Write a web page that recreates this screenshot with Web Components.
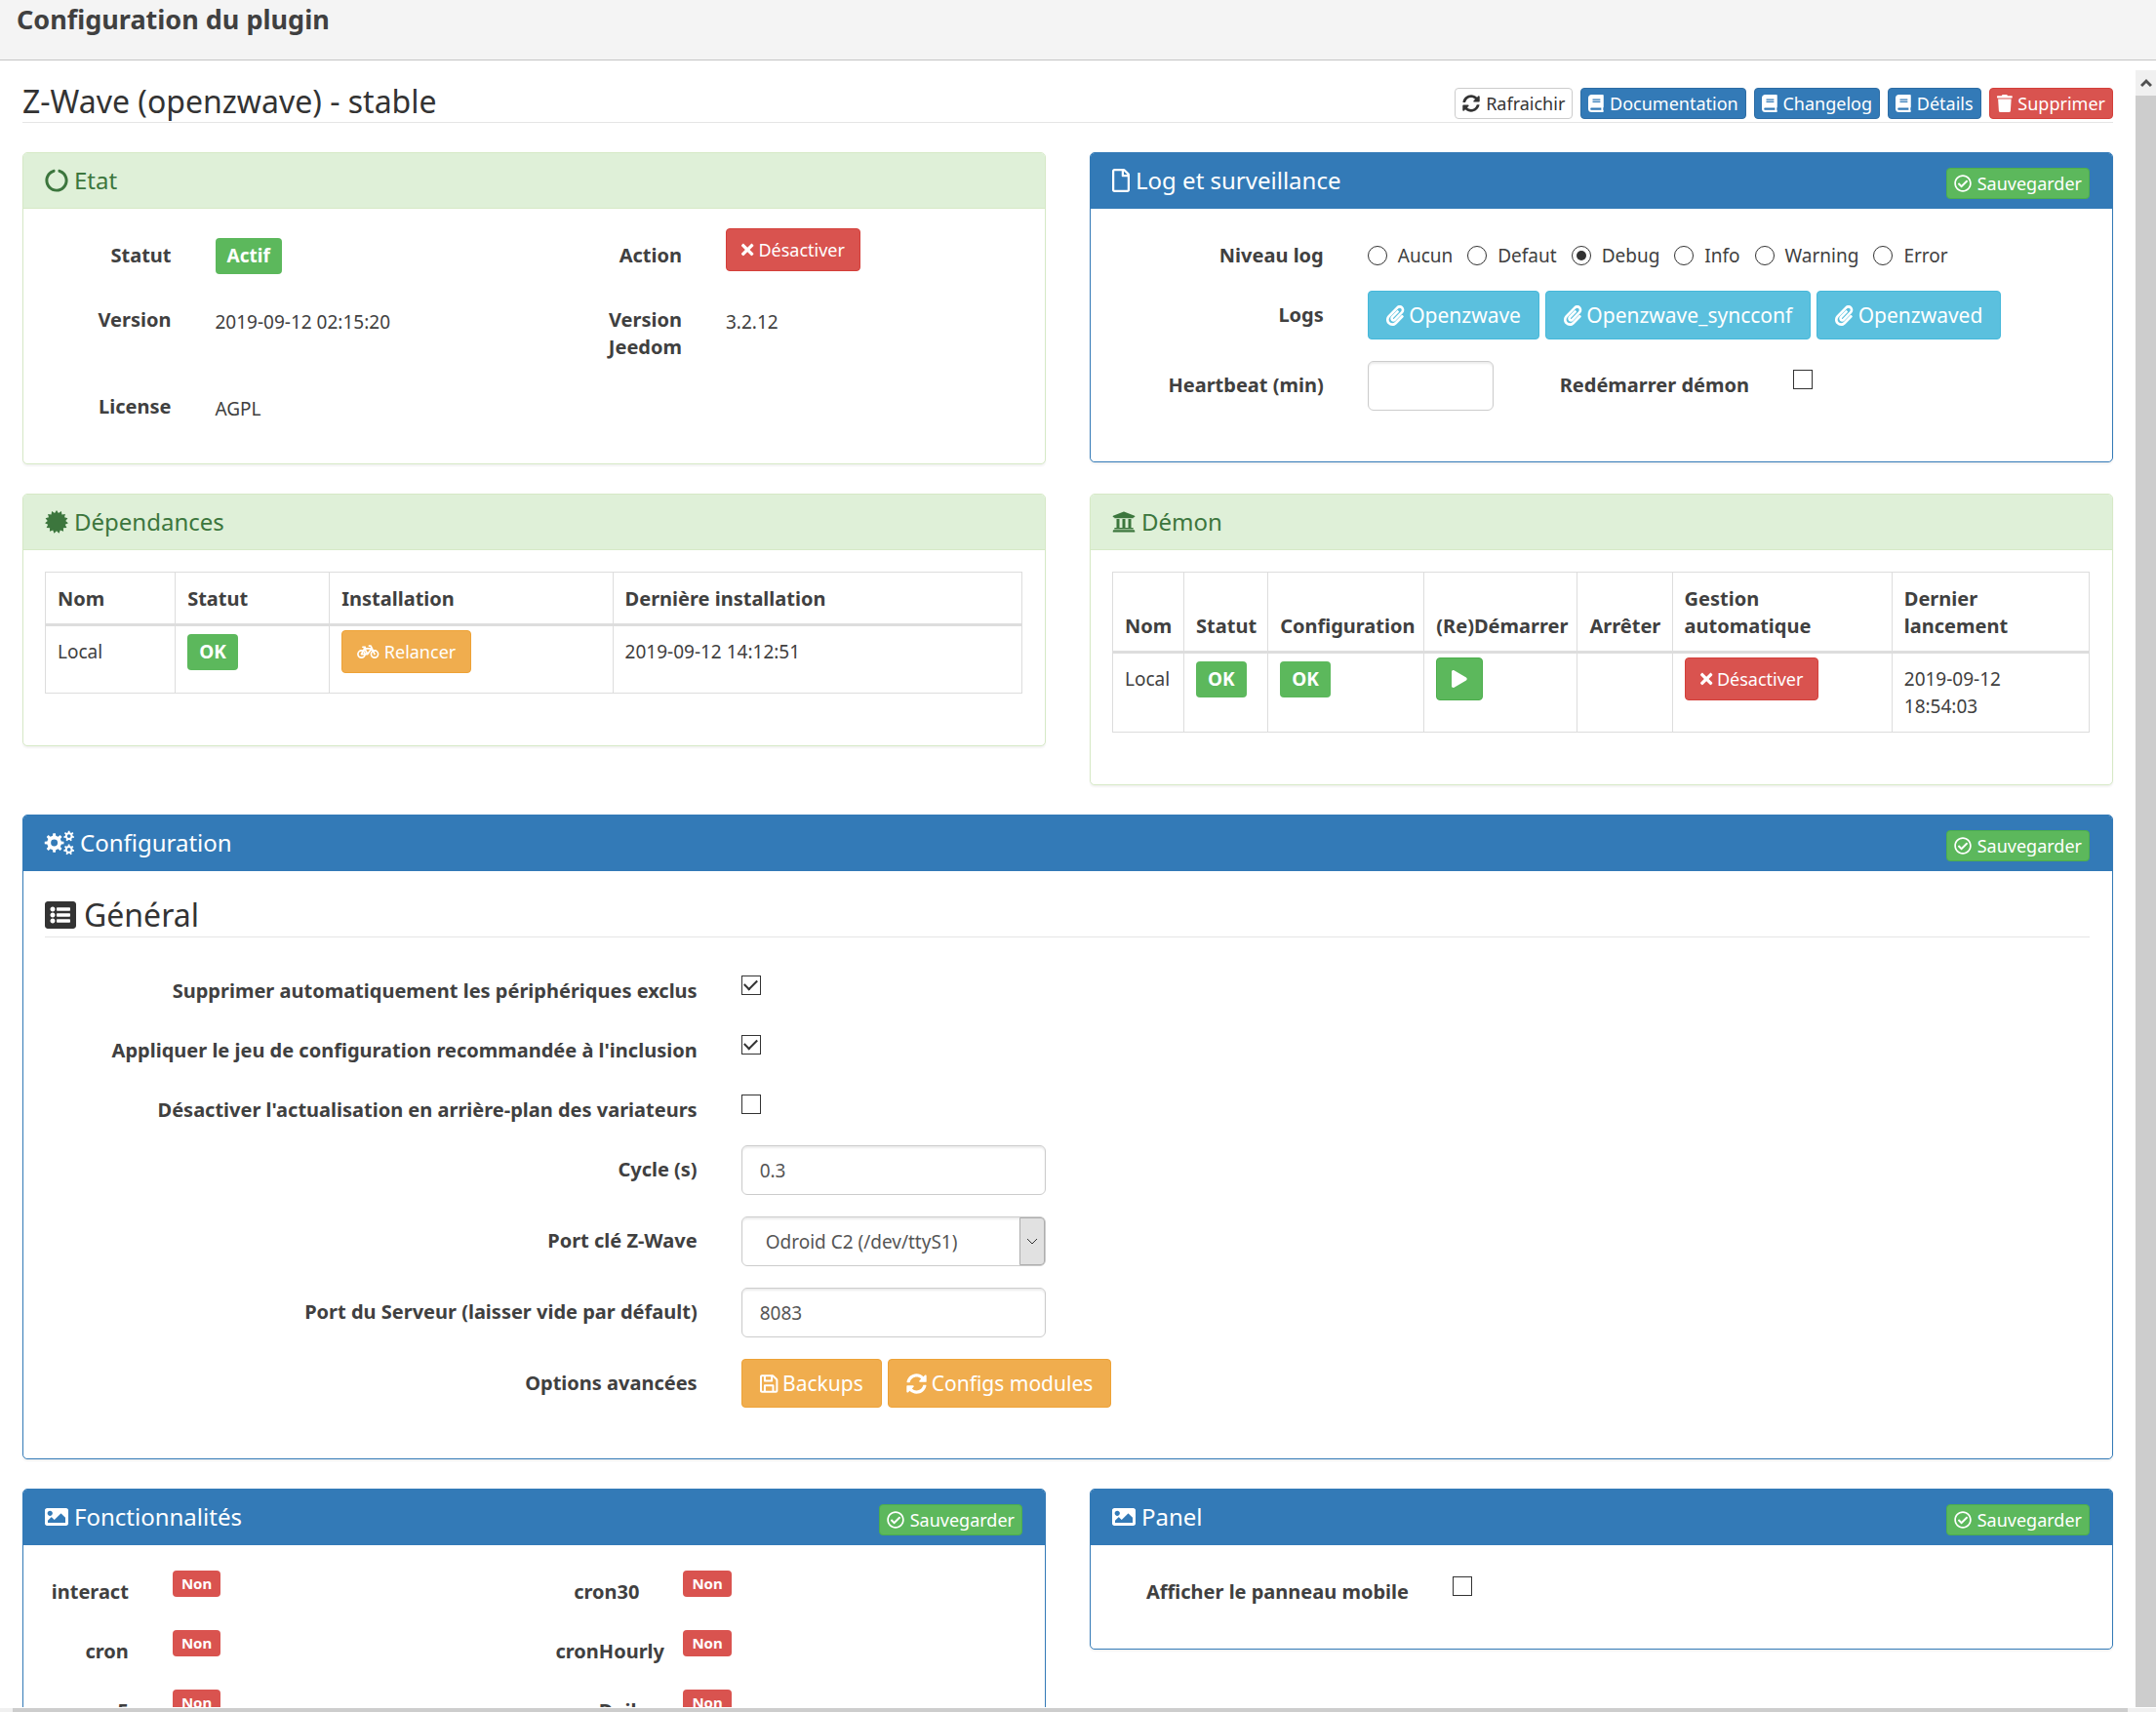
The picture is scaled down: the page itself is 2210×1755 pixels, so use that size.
<!DOCTYPE html>
<html lang="fr">
<head>
<meta charset="utf-8">
<title>Configuration du plugin</title>
<style>
html,body{margin:0;height:100%}
body{font-family:"Noto Sans",sans-serif;font-size:19px;line-height:28px;color:#404040;background:#fff;overflow:hidden}
</style>
</head>
<body>
<plugin-dialog></plugin-dialog>
<script>
/* Outline with n pointed teeth, for the certificate seal */
const seal=(cx,cy,n,R,r)=>'M'+Array.from({length:2*n},(_,i)=>{const a=Math.PI*i/n,q=i%2?r:R;return (cx+q*Math.sin(a)).toFixed(1)+' '+(cy-q*Math.cos(a)).toFixed(1)}).join('L')+'Z';
/* Gear with n square teeth and a round hole */
const gear=(cx,cy,n,R,r,h)=>{
  const pts=[];
  for(let i=0;i<n;i++)for(const [o,q] of [[-.28,r],[-.17,R],[.17,R],[.28,r]]){
    const a=2*Math.PI*(i+o)/n;pts.push((cx+q*Math.sin(a)).toFixed(1)+' '+(cy-q*Math.cos(a)).toFixed(1));
  }
  return `M${pts.join('L')}ZM${cx-h} ${cy}a${h} ${h} 0 1 0 ${2*h} 0a${h} ${h} 0 1 0 ${-2*h} 0Z`;
};
const ICONS={
sync:[512,512,'<path d="M370.72 133.28C339.458 104.008 298.888 87.962 255.848 88c-77.458.068-144.328 53.178-162.791 126.85-1.344 5.363-6.122 9.15-11.651 9.15H24.103c-7.498 0-13.194-6.807-11.807-14.176C33.933 94.924 134.813 8 256 8c66.448 0 126.791 26.136 171.315 68.685L463.03 40.97C478.149 25.851 504 36.559 504 57.941V192c0 13.255-10.745 24-24 24H345.941c-21.382 0-32.09-25.851-16.971-40.971l41.75-41.749zM32 296h134.059c21.382 0 32.09 25.851 16.971 40.971l-41.75 41.75c31.262 29.273 71.835 45.319 114.876 45.28 77.418-.07 144.315-53.144 162.787-126.849 1.344-5.363 6.122-9.15 11.651-9.15h57.304c7.498 0 13.194 6.807 11.807 14.176C478.067 417.076 377.187 504 256 504c-66.448 0-126.791-26.136-171.315-68.685L48.97 471.03C33.851 486.149 8 475.441 8 454.059V320c0-13.255 10.745-24 24-24z"/>'],
book:[448,512,'<path d="M448 360V24c0-13.3-10.7-24-24-24H96C43 0 0 43 0 96v320c0 53 43 96 96 96h328c13.3 0 24-10.7 24-24v-16c0-7.5-3.5-14.3-8.9-18.7-4.2-15.4-4.2-59.3 0-74.7 5.4-4.3 8.9-11.1 8.9-18.6zM128 134c0-3.3 2.7-6 6-6h212c3.3 0 6 2.7 6 6v20c0 3.3-2.7 6-6 6H134c-3.3 0-6-2.7-6-6v-20zm0 64c0-3.3 2.7-6 6-6h212c3.3 0 6 2.7 6 6v20c0 3.3-2.7 6-6 6H134c-3.3 0-6-2.7-6-6v-20zm253.4 250H96c-17.7 0-32-14.3-32-32 0-17.6 14.4-32 32-32h285.4c-1.9 17.1-1.9 46.9 0 64z"/>'],
trash:[448,512,'<path d="M432 32H312l-9.4-18.7A24 24 0 0 0 281.1 0H166.8a23.72 23.72 0 0 0-21.4 13.3L136 32H16A16 16 0 0 0 0 48v32a16 16 0 0 0 16 16h416a16 16 0 0 0 16-16V48a16 16 0 0 0-16-16zM53.2 467a48 48 0 0 0 47.9 45h245.8a48 48 0 0 0 47.9-45L416 128H32z"/>'],
check:[512,512,'<path d="M256 8C119.033 8 8 119.033 8 256s111.033 248 248 248 248-111.033 248-248S392.967 8 256 8zm0 48c110.532 0 200 89.451 200 200 0 110.532-89.451 200-200 200-110.532 0-200-89.451-200-200 0-110.532 89.451-200 200-200m140.204 130.267l-22.536-22.718c-4.667-4.705-12.265-4.736-16.97-.068L215.346 303.697l-59.792-60.277c-4.667-4.705-12.265-4.736-16.97-.069l-22.719 22.536c-4.705 4.667-4.736 12.265-.068 16.971l90.781 91.516c4.667 4.705 12.265 4.736 16.97.068l172.589-171.204c4.704-4.668 4.734-12.266.067-16.971z"/>'],
notch:[512,512,'<path d="M288 39.056v16.659c0 10.804 7.281 20.159 17.686 23.066C383.204 100.434 440 171.518 440 256c0 101.689-82.295 184-184 184-101.689 0-184-82.295-184-184 0-84.47 56.786-155.564 134.312-177.219C216.719 75.874 224 66.517 224 55.712V39.064c0-15.709-14.834-27.153-30.046-23.234C86.603 43.482 7.394 141.206 8.003 257.332c.72 137.052 111.477 246.956 248.531 246.667C393.255 503.711 504 392.788 504 256c0-115.633-79.14-212.779-186.211-240.236C302.678 11.889 288 23.456 288 39.056z"/>'],
file:[384,512,'<path d="M369.9 97.9L286 14C277 5 264.8-.1 252.1-.1H48C21.5 0 0 21.5 0 48v416c0 26.5 21.5 48 48 48h288c26.5 0 48-21.5 48-48V131.9c0-12.7-5.1-25-14.1-34zM332.1 128H256V51.9l76.1 76.1zM48 464V48h160v104c0 13.3 10.7 24 24 24h104v288H48z"/>'],
clip:[448,512,'<path d="M43.246 466.142c-58.43-60.289-57.341-157.511 1.386-217.581L254.392 34c44.316-45.332 116.351-45.336 160.671 0 43.89 44.894 43.943 117.329 0 162.276L232.214 383.128c-29.855 30.537-78.633 30.111-107.982-.998-28.275-29.97-27.368-77.473 1.452-106.953l143.743-146.835c6.182-6.314 16.312-6.422 22.626-.241l22.861 22.379c6.315 6.182 6.422 16.312.241 22.626L171.427 319.927c-4.932 5.045-5.236 13.428-.648 18.292 4.372 4.634 11.245 4.711 15.688.165l182.849-186.851c19.613-20.062 19.613-52.725-.011-72.798-19.189-19.627-49.957-19.637-69.154 0L90.39 293.295c-34.763 35.56-35.299 93.12-1.191 128.313 34.01 35.093 88.985 35.137 123.058.286l172.06-175.999c6.177-6.319 16.307-6.433 22.626-.256l22.877 22.364c6.319 6.177 6.434 16.307.256 22.626l-172.06 175.998c-59.576 60.938-155.943 60.216-214.77-.485z"/>'],
save:[448,512,'<path d="M433.941 129.941l-83.882-83.882A48 48 0 0 0 316.118 32H48C21.49 32 0 53.49 0 80v352c0 26.51 21.49 48 48 48h352c26.51 0 48-21.49 48-48V163.882a48 48 0 0 0-14.059-33.941zM272 80v80H144V80h128zm122 352H352V296a24 24 0 0 0-24-24H120a24 24 0 0 0-24 24v136H54a6 6 0 0 1-6-6V86a6 6 0 0 1 6-6h42v104c0 13.255 10.745 24 24 24h176c13.255 0 24-10.745 24-24V83.882l78.243 78.243a6 6 0 0 1 1.757 4.243V426a6 6 0 0 1-6 6zM144 432v-112h160v112z"/>'],
cert:[512,512,`<path d="${seal(256,256,15,256,198)}"/>`],
univ:[512,512,'<path d="M496 128v16a8 8 0 0 1-8 8h-24v12c0 6.627-5.373 12-12 12H60c-6.627 0-12-5.373-12-12v-12H24a8 8 0 0 1-8-8v-16a8 8 0 0 1 4.941-7.392l232-88a7.996 7.996 0 0 1 6.118 0l232 88A8 8 0 0 1 496 128zm-24 304H40c-13.255 0-24 10.745-24 24v16a8 8 0 0 0 8 8h464a8 8 0 0 0 8-8v-16c0-13.255-10.745-24-24-24zM96 192v192H60c-6.627 0-12 5.373-12 12v20h416v-20c0-6.627-5.373-12-12-12h-36V192h-64v192h-64V192h-64v192h-64V192H96z"/>'],
listalt:[512,512,'<path d="M464 480H48c-26.51 0-48-21.49-48-48V80c0-26.51 21.49-48 48-48h416c26.51 0 48 21.49 48 48v352c0 26.51-21.49 48-48 48zM128 120c-22.091 0-40 17.909-40 40s17.909 40 40 40 40-17.909 40-40-17.909-40-40-40zm0 96c-22.091 0-40 17.909-40 40s17.909 40 40 40 40-17.909 40-40-17.909-40-40-40zm0 96c-22.091 0-40 17.909-40 40s17.909 40 40 40 40-17.909 40-40-17.909-40-40-40zm288-136v-32c0-6.627-5.373-12-12-12H204c-6.627 0-12 5.373-12 12v32c0 6.627 5.373 12 12 12h200c6.627 0 12-5.373 12-12zm0 96v-32c0-6.627-5.373-12-12-12H204c-6.627 0-12 5.373-12 12v32c0 6.627 5.373 12 12 12h200c6.627 0 12-5.373 12-12zm0 96v-32c0-6.627-5.373-12-12-12H204c-6.627 0-12 5.373-12 12v32c0 6.627 5.373 12 12 12h200c6.627 0 12-5.373 12-12z"/>'],
image:[512,512,'<path d="M464 448H48c-26.51 0-48-21.49-48-48V112c0-26.51 21.49-48 48-48h416c26.51 0 48 21.49 48 48v288c0 26.51-21.49 48-48 48zM112 120c-30.928 0-56 25.072-56 56s25.072 56 56 56 56-25.072 56-56-25.072-56-56-56zM64 384h384V272l-87.515-87.515c-4.686-4.686-12.284-4.686-16.971 0L208 320l-55.515-55.515c-4.686-4.686-12.284-4.686-16.971 0L64 336v48z"/>'],
times:[352,512,'<path d="M242.72 256l100.07-100.07c12.28-12.28 12.28-32.19 0-44.48l-22.24-22.24c-12.28-12.28-32.19-12.28-44.48 0L176 189.28 75.93 89.21c-12.28-12.28-32.19-12.28-44.48 0L9.21 111.45c-12.28 12.28-12.28 32.19 0 44.48L109.28 256 9.21 356.07c-12.28 12.28-12.28 32.19 0 44.48l22.24 22.24c12.28 12.28 32.2 12.28 44.48 0L176 322.72l100.07 100.07c12.28 12.28 32.2 12.28 44.48 0l22.24-22.24c12.28-12.28 12.28-32.19 0-44.48L242.72 256z"/>'],
play:[448,512,'<path d="M424.4 214.7L72.4 6.6C43.8-10.3 0 6.1 0 47.9V464c0 37.5 40.7 60.1 72.4 41.3l352-208c31.4-18.5 31.5-64.1 0-82.6z"/>'],
bike:[640,512,'<g fill="none" stroke="currentColor" stroke-width="48" stroke-linejoin="round" stroke-linecap="round"><circle cx="128" cy="328" r="102"/><circle cx="512" cy="328" r="102"/><path d="M128 328L216 168H420L308 328ZM308 328L200 128M168 120H236M352 88H400L512 328"/></g>'],
cogs:[640,512,`<path fill-rule="evenodd" d="${gear(205,256,8,212,158,74)}${gear(526,108,7,116,84,40)}${gear(526,404,7,116,84,40)}"/>`]
};
const define=(name,html)=>customElements.define(name,class extends HTMLElement{
  constructor(){
    super();
    const t=document.createElement('template');
    t.innerHTML=typeof html==='function'?html(this):html;
    this.attachShadow({mode:'open'}).append(t.content.cloneNode(true));
  }
});

define('fa-icon',el=>{
  const [w,h,body]=ICONS[el.getAttribute('name')];
  return `<style>:host{display:inline-block;line-height:0}svg{display:block;height:1em;fill:currentColor;overflow:visible}</style>
  <svg viewBox="0 0 ${w} ${h}" aria-hidden="true">${body}</svg>`;
});

define('ui-button',el=>`<style>
:host{display:inline-block;flex:none}
button{display:flex;align-items:center;justify-content:center;gap:5px;margin:0;box-sizing:border-box;width:100%;font:inherit;white-space:nowrap;cursor:pointer;
border:1px solid var(--bd);background:var(--bg);color:var(--fg,#fff);border-radius:4px}
.xs{font-size:18px;height:32px;padding:0 7px;gap:6px}
.sm{font-size:18px;height:44px;padding:0 15px}
.md{font-size:21px;height:50px;padding:0 18px}
.default{--bg:#fff;--bd:#ccc;--fg:#333}
.primary{--bg:#337ab7;--bd:#2e6da4}
.success{--bg:#5cb85c;--bd:#4cae4c}
.danger{--bg:#d9534f;--bd:#d43f3a}
.warning{--bg:#f0ad4e;--bd:#eea236}
.info{--bg:#5bc0de;--bd:#46b8da}
</style><button type="button" class="${el.getAttribute('size')||'sm'} ${el.getAttribute('kind')}" ${el.hasAttribute('title')?`aria-label="${el.title}"`:''}>${el.hasAttribute('icon')?`<fa-icon name="${el.getAttribute('icon')}"></fa-icon>`:''}<slot></slot></button>`);

define('ui-badge',`<style>
:host{display:inline-block;box-sizing:border-box;height:37px;padding:0 12px;border-radius:4px;background:#5cb85c;color:#fff;font-weight:700;line-height:36px;vertical-align:top}
:host([kind=no]){height:27px;padding:0 9px;background:#d9534f;font-size:15px;line-height:27px}
</style><slot></slot>`);

define('ui-panel',el=>`<style>
:host{display:block;box-sizing:border-box;border:1px solid #337ab7;border-radius:5px;background:#fff;box-shadow:0 2px 2px rgba(0,0,0,.05);--hb:#337ab7;--hc:#fff}
:host([kind=success]){border-color:#d6e9c6;--hb:#dff0d8;--hc:#3c763d}
header{display:flex;align-items:flex-start;justify-content:space-between;box-sizing:border-box;height:57px;padding:15px 23px 0 22px;background:var(--hb);color:var(--hc);border-bottom:1px solid #337ab7;border-radius:4px 4px 0 0}
:host([kind=success]) header{border-color:#d6e9c6}
h3{margin:0;font-size:24px;line-height:25px;font-weight:400;display:flex;align-items:center;gap:6px}
.body{padding:22px 0}
</style><header><h3><fa-icon name="${el.getAttribute('icon')}"></fa-icon>${el.getAttribute('heading')}</h3>${el.hasAttribute('save')?'<ui-button size="xs" kind="success" icon="check">Sauvegarder</ui-button>':''}</header><div class="body"><slot></slot></div>`);

const FIELD=`
*{box-sizing:border-box}
:host{display:block;padding-top:1px}
.row{display:grid;grid-template-columns:var(--cols);margin-bottom:22px}
.row>*{padding:0 23px 0 22px;min-width:0}
.row>.lab{font-size:20px;font-weight:700;text-align:right;padding-top:11px}
.lab.nw{white-space:nowrap}
.row>.txt{padding-top:13px}
.row>.chk{padding-top:9px;line-height:0}
.btns{display:flex;gap:6px;align-items:flex-start}
input[type=checkbox]{appearance:none;margin:0;width:20px;height:20px;border:1px solid #333;background:#fff;display:inline-grid;place-items:center}
input[type=checkbox]:checked::before{content:"";width:11px;height:6px;border:solid #333;border-width:0 0 2px 2px;transform:translateY(-2px) rotate(-45deg)}
input[type=radio]{appearance:none;margin:0;width:20px;height:20px;border:1px solid #333;border-radius:50%;background:#fff;display:inline-grid;place-items:center}
input[type=radio]:checked::before{content:"";width:10px;height:10px;border-radius:50%;background:#333}
.ctl{display:block;width:100%;height:51px;padding:0 18px;border:1px solid #ccc;border-radius:6px;background:#fff;box-shadow:inset 0 2px 2px rgba(0,0,0,.075);font:inherit;color:#555}
`;
const COLS=(...n)=>n.map(x=>`minmax(0,${x}fr)`).join(' ');

define('state-form',`<style>${FIELD}:host{--cols:${COLS(2,4,2,4)}}.row>.bd{padding-top:7px}.up{margin:-3px 0 3px}.row:last-child{margin-bottom:20px}</style>
<div class="row"><div class="lab">Statut</div><div class="bd"><ui-badge>Actif</ui-badge></div><div class="lab">Action</div><div class="up"><ui-button kind="danger" icon="times">Désactiver</ui-button></div></div>
<div class="row"><div class="lab">Version</div><div class="txt">2019-09-12 02:15:20</div><div class="lab">Version Jeedom</div><div class="txt">3.2.12</div></div>
<div class="row"><div class="lab">License</div><div class="txt">AGPL</div></div>`);

define('log-form',`<style>${FIELD}:host{padding-bottom:8px}
.a{--cols:${COLS(3,9)}}.b{--cols:${COLS(3,2,3,4)}}
.row>.radios{display:flex;gap:15px;padding-top:11px}
.radios label{display:flex;align-items:center;gap:11px}
</style>
<div class="row a" role="radiogroup" aria-labelledby="lvl"><div class="lab" id="lvl">Niveau log</div><div class="radios">
${['Aucun','Defaut','Debug','Info','Warning','Error'].map(n=>`<label><input type="radio" name="level" ${n==='Debug'?'checked':''}>${n}</label>`).join('')}</div></div>
<div class="row a"><div class="lab">Logs</div><div class="btns">${['Openzwave','Openzwave_syncconf','Openzwaved'].map(n=>`<ui-button size="md" kind="info" icon="clip">${n}</ui-button>`).join('')}</div></div>
<div class="row b"><label class="lab" for="hb">Heartbeat (min)</label><div><input class="ctl" id="hb" type="text"></div><label class="lab" for="rd">Redémarrer démon</label><div class="chk"><input type="checkbox" id="rd"></div></div>`);

const TABLE=`:host{display:block;padding:0 23px 31px 22px}
table{width:100%;border-collapse:collapse;table-layout:fixed;border:1px solid #ddd}
th,td{border:1px solid #ddd;padding:12px;text-align:left;vertical-align:top}
th{vertical-align:bottom;border-bottom:3px solid #ddd;font-size:20px;padding:13px 8px 11px 12px}
td.bad{padding:8px 12px 0}
td.act{padding:4px 12px 20px;line-height:0}
`;
define('deps-table',`<style>${TABLE}</style><table>
<colgroup><col style="width:13.3%"><col style="width:15.8%"><col style="width:29%"><col></colgroup>
<thead><tr><th>Nom</th><th>Statut</th><th>Installation</th><th>Dernière installation</th></tr></thead>
<tbody><tr><td>Local</td><td class="bad"><ui-badge>OK</ui-badge></td><td class="act"><ui-button kind="warning" icon="bike">Relancer</ui-button></td><td>2019-09-12 14:12:51</td></tr></tbody></table>`);

define('daemon-table',`<style>${TABLE}</style><table>
<colgroup><col style="width:7.3%"><col style="width:8.6%"><col style="width:16%"><col style="width:15.7%"><col style="width:9.7%"><col style="width:22.5%"><col></colgroup>
<thead><tr><th>Nom</th><th>Statut</th><th>Configuration</th><th>(Re)Démarrer</th><th>Arrêter</th><th>Gestion<br>automatique</th><th>Dernier<br>lancement</th></tr></thead>
<tbody><tr><td>Local</td><td class="bad"><ui-badge>OK</ui-badge></td><td class="bad"><ui-badge>OK</ui-badge></td><td class="act"><ui-button kind="success" icon="play" title="Démarrer"></ui-button></td><td></td><td class="act"><ui-button kind="danger" icon="times">Désactiver</ui-button></td><td>2019-09-12 18:54:03</td></tr></tbody></table>`);

define('general-form',`<style>${FIELD}:host{padding-bottom:8px;--cols:${COLS(4,2,6)}}
h2{margin:0 23px 30px 22px;border-bottom:1px solid #e5e5e5;font-weight:400;font-size:32px;line-height:44px;color:#333;display:flex;gap:8px;align-items:center}
.wide{grid-column:2/4}
.sel{display:grid;align-items:center}
.sel>*{grid-area:1/1}
select.ctl{appearance:none;padding:0 50px 0 24px}
.arrow{justify-self:end;width:26px;height:49px;margin-right:1px;background:#e1e1e1;border:1px solid #adadad;display:grid;place-items:center;border-radius:0 4px 4px 0;pointer-events:none}
.arrow svg{width:12px;height:7px;fill:none;stroke:#333}
</style>
<h2><fa-icon name="listalt"></fa-icon>Général</h2>
<div class="row"><label class="lab" for="x1">Supprimer automatiquement les périphériques exclus</label><div class="chk"><input type="checkbox" id="x1" checked></div></div>
<div class="row"><label class="lab" for="x2">Appliquer le jeu de configuration recommandée à l'inclusion</label><div class="chk"><input type="checkbox" id="x2" checked></div></div>
<div class="row"><label class="lab" for="x3">Désactiver l'actualisation en arrière-plan des variateurs</label><div class="chk"><input type="checkbox" id="x3"></div></div>
<div class="row"><label class="lab" for="cy">Cycle (s)</label><div><input class="ctl" id="cy" type="text" value="0.3"></div></div>
<div class="row"><label class="lab" for="pt">Port clé Z-Wave</label><div class="sel"><select class="ctl" id="pt"><option>Odroid C2 (/dev/ttyS1)</option></select><span class="arrow"><svg viewBox="0 0 12 7"><path d="M1 1l5 5 5-5"/></svg></span></div></div>
<div class="row"><label class="lab" for="sv">Port du Serveur (laisser vide par défault)</label><div><input class="ctl" id="sv" type="text" value="8083"></div></div>
<div class="row"><div class="lab">Options avancées</div><div class="btns wide"><ui-button size="md" kind="warning" icon="save">Backups</ui-button><ui-button size="md" kind="warning" icon="sync">Configs modules</ui-button></div></div>`);

define('features-form',`<style>${FIELD}:host{--cols:${COLS(3,9,3,9)}}.row>.bd{padding-top:3px}</style>
${[['interact','cron30'],['cron','cronHourly'],['cron5','cronDaily']].map(r=>`<div class="row">${r.map(n=>`<div class="lab nw">${n}</div><div class="bd"><ui-badge kind="no">Non</ui-badge></div>`).join('')}</div>`).join('')}`);

define('mobile-form',`<style>${FIELD}:host{--cols:${COLS(4,8)}}</style>
<div class="row"><label class="lab" for="m">Afficher le panneau mobile</label><div class="chk"><input type="checkbox" id="m"></div></div>`);

define('scroll-rail',`<style>:host{display:flex;flex-direction:column;width:21px;flex:none;margin:10px 0 1px;background:#cdcdcd}
div{height:26px;background:#f0f0f0;display:grid;place-items:center}svg{width:12px;height:10px;fill:none;stroke:#505050;stroke-width:3}</style>
<div><svg viewBox="0 0 12 10"><path d="M1 8l5-5 5 5"/></svg></div>`);

define('plugin-dialog',`<style>
:host{display:flex;flex-direction:column;height:100vh;overflow:hidden}
.bar{flex:none;box-sizing:border-box;height:62px;padding:1px 17px;background:#f4f4f4;border-bottom:1px solid #c5c5c5}
h1{margin:0;font-size:27px;line-height:38px;font-weight:700}
.mid{flex:1;min-height:0;display:flex}
main{flex:1;min-width:0;overflow:hidden;padding:28px 23px 0;margin-bottom:1px;display:flex;flex-direction:column;gap:30px}
main>*{flex:none}
.top{display:flex;justify-content:space-between;align-items:flex-start;border-bottom:1px solid #e5e5e5;height:35px}
h2{margin:0;font-size:32px;line-height:28px;font-weight:400;color:#333;white-space:nowrap}
.btns{display:flex;gap:8px}
.pair{display:grid;grid-template-columns:repeat(2,minmax(0,1fr));gap:45px;align-items:start}
.hbar{flex:none;height:4px;background:#cdcdcd;border:solid #f0f0f0;border-width:0 29px 0 13px;box-sizing:border-box}
</style>
<div class="bar"><h1>Configuration du plugin</h1></div>
<div class="mid"><main>
<div class="top"><h2>Z-Wave (openzwave) - stable</h2><div class="btns">
<ui-button size="xs" kind="default" icon="sync">Rafraichir</ui-button><ui-button size="xs" kind="primary" icon="book">Documentation</ui-button><ui-button size="xs" kind="primary" icon="book">Changelog</ui-button><ui-button size="xs" kind="primary" icon="book">Détails</ui-button><ui-button size="xs" kind="danger" icon="trash">Supprimer</ui-button></div></div>
<div class="pair"><ui-panel kind="success" icon="notch" heading="Etat"><state-form></state-form></ui-panel><ui-panel icon="file" heading="Log et surveillance" save><log-form></log-form></ui-panel></div>
<div class="pair"><ui-panel kind="success" icon="cert" heading="Dépendances"><deps-table></deps-table></ui-panel><ui-panel kind="success" icon="univ" heading="Démon"><daemon-table></daemon-table></ui-panel></div>
<ui-panel icon="cogs" heading="Configuration" save><general-form></general-form></ui-panel>
<div class="pair"><ui-panel icon="image" heading="Fonctionnalités" save><features-form></features-form></ui-panel><ui-panel icon="image" heading="Panel" save><mobile-form></mobile-form></ui-panel></div>
</main><scroll-rail></scroll-rail></div><div class="hbar"></div>`);
</script>
</body>
</html>
